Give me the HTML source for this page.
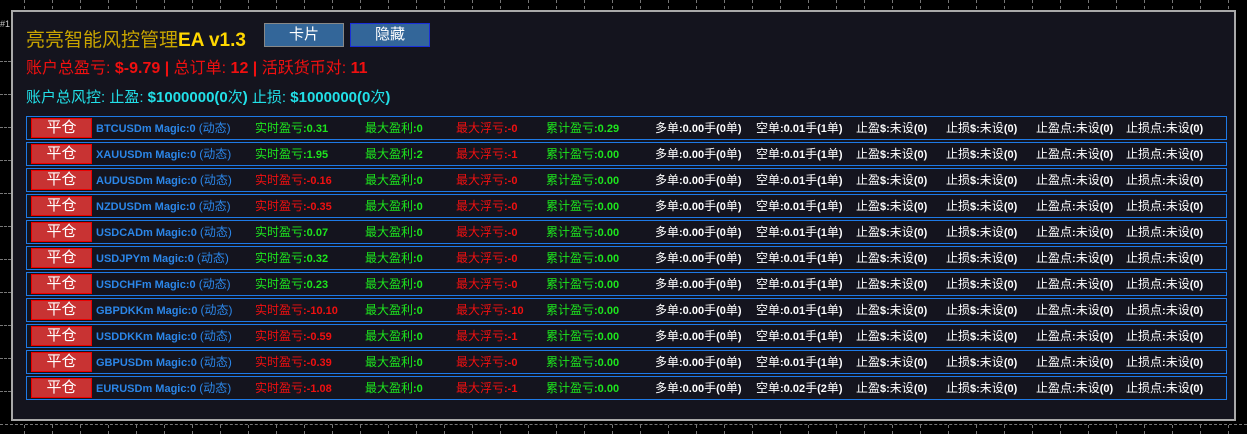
<!DOCTYPE html><html><head><meta charset="utf-8"><style>
*{margin:0;padding:0;box-sizing:border-box}
body{width:1247px;height:434px;background:#000;position:relative;overflow:hidden;font-family:"Liberation Sans","Noto Sans CJK SC",sans-serif}
.a{position:absolute;white-space:nowrap}
.panel{position:absolute;left:11px;top:10px;width:1225px;height:411px;background:#14141e;border:2px solid #a9a9a9}
.row{position:absolute;left:26px;width:1201px;height:24px;border:1px solid #1e7ae6}
.btn{position:absolute;left:4px;top:1px;width:61px;height:20px;background:#c83333;border:1px solid #e00;color:#fff;font-size:15px;text-align:center;line-height:18px}
.c{position:absolute;top:4px;font-size:11px;font-weight:bold;line-height:14px}
.c i{font-style:normal;font-weight:normal;font-size:12px}
.b{color:#2b86e8}.g{color:#1de51d}.r{color:#f01010}.w{color:#fff}
.hl{position:absolute;height:0;border-top:1px dashed #777}
.vl{position:absolute;width:0;border-left:1px dashed #777}
</style></head><body>
<div class="hl" style="left:0;top:61px;width:11px"></div>
<div class="hl" style="left:0;top:94px;width:11px"></div>
<div class="hl" style="left:0;top:127px;width:11px"></div>
<div class="hl" style="left:0;top:160px;width:11px"></div>
<div class="hl" style="left:0;top:193px;width:11px"></div>
<div class="hl" style="left:0;top:226px;width:11px"></div>
<div class="hl" style="left:0;top:259px;width:11px"></div>
<div class="hl" style="left:0;top:292px;width:11px"></div>
<div class="hl" style="left:0;top:325px;width:11px"></div>
<div class="hl" style="left:0;top:358px;width:11px"></div>
<div class="hl" style="left:0;top:391px;width:11px"></div>
<div class="hl" style="left:0;top:424px;width:1247px"></div>
<div class="a" style="left:0;top:19px;font-size:9px;color:#ccc">#1</div>
<div id="v"></div>
<div class="panel"></div>
<div class="a" style="left:26px;top:25px;font-size:19px;color:#c8a400">亮亮智能风控管理<b style="color:#ffd700">EA v1.3</b></div>
<div class="a" style="left:264px;top:23px;width:80px;height:24px;background:#336699;border:1px solid #888;color:#fff;font-size:15px;text-align:center;line-height:22px">卡片</div>
<div class="a" style="left:350px;top:23px;width:80px;height:24px;background:#336699;border:1px solid #1a2fd8;color:#fff;font-size:15px;text-align:center;line-height:22px">隐藏</div>
<div class="a" style="left:26px;top:54px;font-size:16px;color:#f01010">账户总盈亏: <b>$-9.79 | </b>总订单: <b>12 | </b>活跃货币对: <b>11</b></div>
<div class="a" style="left:26px;top:86px;font-size:15px;color:#22e0e8">账户总风控: 止盈: <b>$1000000(0</b>次<b>)</b> 止损: <b>$1000000(0</b>次<b>)</b></div>
<div id="rows"></div>
<script>
var v='';for(var x=24;x<1247;x+=28){v+='<div class="vl" style="left:'+x+'px;top:0;height:9px"></div><div class="vl" style="left:'+x+'px;top:425px;height:9px"></div>';}
document.getElementById('v').innerHTML=v;
function L(s){return '<i>'+s+'</i>';}
var d=[["BTCUSDm","0.31","g","0","0","0.29","0.01","1"],["XAUUSDm","1.95","g","2","1","0.00","0.01","1"],["AUDUSDm","-0.16","r","0","0","0.00","0.01","1"],["NZDUSDm","-0.35","r","0","0","0.00","0.01","1"],["USDCADm","0.07","g","0","0","0.00","0.01","1"],["USDJPYm","0.32","g","0","0","0.00","0.01","1"],["USDCHFm","0.23","g","0","0","0.00","0.01","1"],["GBPDKKm","-10.10","r","0","10","0.00","0.01","1"],["USDDKKm","-0.59","r","0","1","0.00","0.01","1"],["GBPUSDm","-0.39","r","0","0","0.00","0.01","1"],["EURUSDm","-1.08","r","0","1","0.00","0.02","2"]];
var h='';d.forEach(function(r,i){var t=116+i*26;
h+='<div class="row" style="top:'+t+'px"><div class="btn">平仓</div>'+
'<div class="c b" style="left:69px">'+r[0]+' Magic:0 '+L('(动态)')+'</div>'+
'<div class="c '+r[2]+'" style="left:228px">'+L('实时盈亏')+':'+r[1]+'</div>'+
'<div class="c g" style="left:338px">'+L('最大盈利')+':'+r[3]+'</div>'+
'<div class="c r" style="left:429px">'+L('最大浮亏')+':-'+r[4]+'</div>'+
'<div class="c g" style="left:519px">'+L('累计盈亏')+':'+r[5]+'</div>'+
'<div class="c w" style="left:628px">'+L('多单')+':0.00'+L('手')+'(0'+L('单')+')</div>'+
'<div class="c w" style="left:729px">'+L('空单')+':'+r[6]+L('手')+'('+r[7]+L('单')+')</div>'+
'<div class="c w" style="left:829px">'+L('止盈')+'$:'+L('未设')+'(0)</div>'+
'<div class="c w" style="left:919px">'+L('止损')+'$:'+L('未设')+'(0)</div>'+
'<div class="c w" style="left:1009px">'+L('止盈点')+':'+L('未设')+'(0)</div>'+
'<div class="c w" style="left:1099px">'+L('止损点')+':'+L('未设')+'(0)</div></div>';});
document.getElementById('rows').innerHTML=h;
</script>
</body></html>
